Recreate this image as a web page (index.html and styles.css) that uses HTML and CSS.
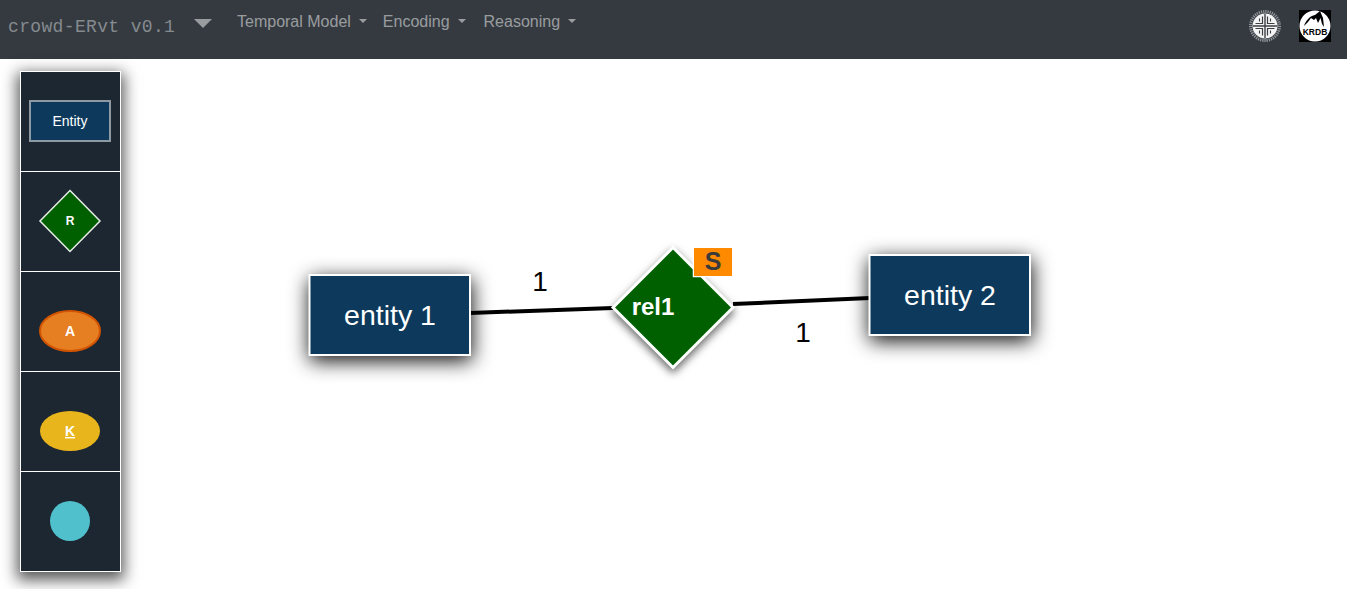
FILE: index.html
```html
<!DOCTYPE html>
<html lang="en">

<head>
    <meta charset="UTF-8">
    <meta name="viewport" content="width=device-width, initial-scale=1.0">
    <title>crowd-ERvt</title>
    <link rel="stylesheet" href="styles.css">
</head>

<body>
    <nav class="navbar">
        <a class="brand" href="#">crowd-ERvt v0.1</a>
        <button class="brand-toggle" aria-label="Menu"></button>
        <ul class="menu">
            <li><a href="#">Temporal Model</a></li>
            <li><a href="#">Encoding</a></li>
            <li class="menu-last"><a href="#">Reasoning</a></li>
        </ul>
        <div class="logos">
            <svg class="logo-uni" viewBox="0 0 32 32" width="32" height="32">
                <circle cx="16" cy="16" r="14.500" fill="none" stroke="#93979b" stroke-width="3" stroke-dasharray="1.200 1"/>
                <circle cx="16" cy="16" r="12.500" fill="#f4f4f4"/>
                <path d="M16 4v24M4 16h24" stroke="#3a3f44" stroke-width="1.400"/>
                <path d="M13.500 6.500v7h-7M18.500 6.500v7h7M13.500 25.500v-7h-7M18.500 25.500v-7h7" fill="none" stroke="#3a3f44" stroke-width="1.200"/>
                <path d="M10.500 8.500v3M21.500 8.500v3M10.500 23.500v-3M21.500 23.500v-3" fill="none" stroke="#3a3f44" stroke-width="1.100"/>
                <path d="M13 30h6" stroke="#777b80" stroke-width="1"/>
            </svg>
            <svg class="logo-krdb" viewBox="0 0 32 32" width="32" height="32">
                <rect width="32" height="32" fill="#000"/>
                <circle cx="16" cy="16" r="15.500" fill="#fff"/>
                <path d="M5 16C7 10 11 6 16 5L21 1 24 8 25 17 23 14 21.500 8 19 13 17 8 15 10 12 8 9 12 7 14z" fill="#000"/>
                <text class="krdb-text" x="16" y="24.500">KRDB</text>
            </svg>
        </div>
    </nav>

    <main class="workspace">
        <aside class="palette">
            <div class="palette-cell">
                <svg viewBox="1 1 99 99" width="99" height="99">
                    <rect class="shape-entity-small" x="10" y="30" width="80" height="40"/>
                    <text class="label-entity" x="50" y="54.500">Entity</text>
                </svg>
            </div>
            <div class="palette-cell">
                <svg viewBox="1 1 99 99" width="99" height="99">
                    <path class="shape-rel-small" d="M50 19.500L80 50 50 80.500 20 50z"/>
                    <text class="label-bold label-r" x="50" y="53.500">R</text>
                </svg>
            </div>
            <div class="palette-cell">
                <svg viewBox="1 1 99 99" width="99" height="99">
                    <ellipse class="shape-attr" cx="50" cy="60" rx="30" ry="20"/>
                    <text class="label-bold" x="50" y="65">A</text>
                </svg>
            </div>
            <div class="palette-cell">
                <svg viewBox="1 1 99 99" width="99" height="99">
                    <ellipse class="shape-key" cx="50" cy="60" rx="30" ry="20"/>
                    <text class="label-bold label-key" x="50" y="65">K</text>
                </svg>
            </div>
            <div class="palette-cell">
                <svg viewBox="1 1 99 99" width="99" height="99">
                    <circle class="shape-inherit" cx="50" cy="50" r="20"/>
                </svg>
            </div>
        </aside>

        <svg class="canvas" viewBox="121 59 1226 530">
            <path class="link" d="M470 313L613 308"/>
            <path class="link" d="M733 304L870 298"/>
            <text class="card" x="540" y="291">1</text>
            <text class="card" x="803" y="342">1</text>

            <g class="node">
                <rect class="entity" x="309.500" y="275" width="160.500" height="80"/>
            </g>
            <text class="entity-name" x="390" y="325">entity 1</text>

            <g class="node">
                <rect class="entity" x="869.500" y="255" width="160.500" height="80"/>
            </g>
            <text class="entity-name" x="950" y="305">entity 2</text>

            <g class="node-rel">
                <path class="rel" d="M673 247.500L733 307.500 673 367.500 613 307.500z"/>
            </g>
            <text class="rel-name" x="653" y="315">rel1</text>

            <rect class="subset-badge" x="694" y="248" width="38" height="28"/>
            <text class="subset-text" x="713" y="270">S</text>
        </svg>
    </main>
</body>

</html>
```
FILE: styles.css
```css
html, body {
    height: 100%;
}

body {
    margin: 0;
    overflow: hidden;
    background: #fff;
    font-family: "Liberation Sans", Arial, sans-serif;
}

.navbar {
    display: flex;
    align-items: flex-start;
    height: 59px;
    padding: 0 16px 0 8px;
    box-sizing: border-box;
    background: #343a40;
}

.brand {
    margin-top: 15px;
    width: 172px;
    font-family: "Liberation Mono", monospace;
    font-size: 18px;
    line-height: 24px;
    letter-spacing: 0.35px;
    color: #858a8f;
    text-decoration: none;
}

.brand-toggle {
    width: 0;
    height: 0;
    margin: 19px 0 0 14px;
    padding: 0;
    background: none;
    border: none;
    border-top: 9px solid #9a9da0;
    border-left: 9px solid transparent;
    border-right: 9px solid transparent;
}

.menu {
    display: flex;
    gap: 16px;
    list-style: none;
    margin: 10px 0 0 25px;
    padding: 0;
}

.menu-last {
    margin-left: 2px;
}

.menu a {
    display: block;
    font-size: 16px;
    line-height: 24px;
    color: rgba(255, 255, 255, 0.5);
    text-decoration: none;
}

.menu a::after {
    content: "";
    display: inline-block;
    margin-left: 8px;
    vertical-align: 4px;
    border-top: 4.800px solid;
    border-left: 4.800px solid transparent;
    border-right: 4.800px solid transparent;
}

.logos {
    display: flex;
    gap: 18px;
    margin: 10px 0 0 auto;
}

.krdb-text {
    font-size: 8.500px;
    font-weight: bold;
    text-anchor: middle;
    fill: #000;
}

.workspace {
    display: flex;
    align-items: flex-start;
}

.palette {
    flex: none;
    width: 99px;
    margin: 12px 0 0 20px;
    background: #1c2732;
    border: 1px solid #fff;
    box-shadow: 0 5px 14px 3px rgba(0, 0, 0, 0.65);
}

.palette-cell {
    height: 99px;
    border-bottom: 1px solid #fff;
}

.palette-cell:last-child {
    border-bottom: none;
}

.palette-cell svg {
    display: block;
}

.palette text {
    text-anchor: middle;
    fill: #fff;
}

.shape-entity-small {
    fill: #0d3a5c;
    stroke: #8d99a3;
    stroke-width: 2;
}

.shape-rel-small {
    fill: #006000;
    stroke: #e8eee8;
    stroke-width: 1.500;
}

.shape-attr {
    fill: #e67e22;
    stroke: #d35400;
    stroke-width: 2;
}

.shape-key {
    fill: #e9b51c;
}

.shape-inherit {
    fill: #50c0cd;
}

.label-entity {
    font-size: 14px;
}

.label-bold {
    font-size: 14px;
    font-weight: bold;
}

.label-r {
    font-size: 12px;
}

.label-key {
    text-decoration: underline;
}

.canvas {
    flex: 1;
    height: 530px;
    display: block;
}

.link {
    fill: none;
    stroke: #000;
    stroke-width: 4;
}

.node {
    filter: drop-shadow(1px 5px 10px rgba(0, 0, 0, 0.95));
}

.node-rel {
    filter: drop-shadow(0 4px 4px rgba(0, 0, 0, 0.6));
}

.entity {
    fill: #0d3a5c;
    stroke: #fff;
    stroke-width: 2;
}

.entity-name {
    font-size: 28.500px;
    text-anchor: middle;
    fill: #fff;
}

.rel {
    fill: #006000;
    stroke: #fff;
    stroke-width: 3;
}

.rel-name {
    font-size: 24px;
    font-weight: bold;
    text-anchor: middle;
    fill: #fff;
}

.card {
    font-size: 28px;
    text-anchor: middle;
    fill: #000;
}

.subset-badge {
    fill: #ff8a00;
    stroke: #fff;
    stroke-width: 2.500;
    paint-order: stroke;
}

.subset-text {
    font-size: 25px;
    font-weight: bold;
    text-anchor: middle;
    fill: #3a3a3a;
}
```
